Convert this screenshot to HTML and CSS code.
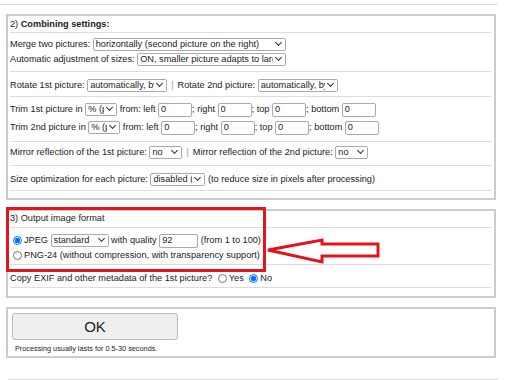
FILE: index.html
```html
<!DOCTYPE html>
<html lang="en">
  <head>
    <meta charset="UTF-8">
    <meta name="viewport" content="width=device-width, initial-scale=1.0">
    <title>Combine pictures</title>
    <link rel="stylesheet" href="styles.css">
  </head>
  <body>
    <div class="page">
      <div class="rule rule-top"></div>

      <div class="box">
        <div class="sec sec-head">2) <b>Combining settings:</b></div>
        <div class="sec sec-merge">
          <div class="row">Merge two pictures: <span class="dd"><select class="w-merge"><option>horizontally (second picture on the right)</option></select></span></div>
          <div class="row">Automatic adjustment of sizes: <span class="dd"><select class="w-auto"><option>ON, smaller picture adapts to larger</option></select></span></div>
        </div>
        <div class="sec sec-rotate">
          <div class="row">Rotate 1st picture: <span class="dd"><select class="w-rot"><option>automatically, by EXIF</option></select></span><span class="sep">|</span>Rotate 2nd picture: <span class="dd"><select class="w-rot"><option>automatically, by EXIF</option></select></span></div>
        </div>
        <div class="sec sec-trim">
          <div class="row row-tall">Trim 1st picture in <span class="dd"><select class="w-unit"><option>% (percent)</option></select></span> from: left <input type="text" value="0">; right <input type="text" value="0">; top <input type="text" value="0">; bottom <input type="text" value="0"></div>
          <div class="row row-tall">Trim 2nd picture in <span class="dd"><select class="w-unit"><option>% (percent)</option></select></span> from: left <input type="text" value="0">; right <input type="text" value="0">; top <input type="text" value="0">; bottom <input type="text" value="0"></div>
        </div>
        <div class="sec sec-mirror">
          <div class="row">Mirror reflection of the 1st picture: <span class="dd"><select class="w-no"><option>no</option></select></span><span class="sep">|</span>Mirror reflection of the 2nd picture: <span class="dd"><select class="w-no"><option>no</option></select></span></div>
        </div>
        <div class="sec sec-size">
          <div class="row">Size optimization for each picture: <span class="dd"><select class="w-size"><option>disabled (default)</option></select></span> (to reduce size in pixels after processing)</div>
        </div>
      </div>

      <div class="box box-format">
        <div class="sec sec-head2">3) Output image format</div>
        <div class="sec sec-format">
          <div class="row"><input type="radio" name="fmt" checked>JPEG <span class="dd"><select class="w-std"><option>standard</option></select></span> with quality <input type="text" class="w-q" value="92"> (from 1 to 100)</div>
          <div class="row"><input type="radio" name="fmt">PNG-24 (without compression, with transparency support)</div>
        </div>
        <div class="sec sec-exif">
          <div class="row">Copy EXIF and other metadata of the 1st picture? <input type="radio" name="exif">Yes <input type="radio" name="exif" checked>No</div>
        </div>
      </div>

      <div class="box box-submit">
        <button class="ok">OK</button>
        <div class="note">Processing usually lasts for 0.5-30 seconds.</div>
      </div>

      <div class="rule rule-bottom"></div>

      <div class="mark"></div>
      <svg class="arrow" width="125" height="36" viewBox="0 0 125 36">
        <polygon points="8,18 62,8 62,12 118,12 118,24 62,24 62,30" fill="none" stroke="#e3141b" stroke-width="3"/>
      </svg>
    </div>
  </body>
</html>
```

FILE: styles.css
```css
body {
    margin: 0;
    font-family: "Liberation Sans", Arial, sans-serif;
    font-size: 9.2px;
    color: #222;
    background: #fff;
}
.page {
    position: relative;
    width: 507px;
    height: 380px;
    overflow: hidden;
}
.rule {
    border-top: 1px solid #ddd;
}
.rule-top {
    margin-top: 4px;
    width: 498px;
}
.rule-bottom {
    margin: 21px 0 0 8px;
    width: 490px;
}
.box {
    box-sizing: border-box;
    width: 490px;
    margin: 9px 0 0 6px;
    border: 2px solid #ccc;
    padding: 0 2px 7px;
}
.box-format {
    padding-bottom: 8px;
}
.box-submit {
    padding: 4px 2px 2px;
}
.sec {
    border-bottom: 1px solid #ddd;
}
.sec-head {
    padding: 1px 0 0;
    line-height: 15px;
}
.sec-merge { padding: 4px 0 4px; }
.sec-rotate { padding: 6px 0 3px; }
.sec-trim { padding: 4px 0 5px; }
.sec-mirror { padding: 3px 0 5px; }
.sec-size { padding: 6px 0 3px; }
.sec-head2 {
    line-height: 15px;
    padding-bottom: 1px;
}
.sec-format { padding: 5px 0 1px; }
.sec-exif { padding: 6px 0 1px; }

.row {
    height: 15px;
    line-height: 15px;
    white-space: nowrap;
}
.row-tall {
    height: 17px;
    line-height: 17px;
    margin-bottom: 1px;
}
.row-tall:last-child {
    margin-bottom: 0;
}
.dd {
    position: relative;
    display: inline-block;
    vertical-align: middle;
    line-height: 0;
}
/* small chevron drawn over the select's right end */
.dd::after {
    content: "";
    position: absolute;
    right: 5px;
    top: 2px;
    width: 4px;
    height: 4px;
    border-right: 1px solid #333;
    border-bottom: 1px solid #333;
    transform: rotate(45deg);
    pointer-events: none;
}
.dd::before {
    content: "";
    position: absolute;
    right: 1px;
    top: 1px;
    width: 12px;
    height: 11px;
    background: #fff;
    pointer-events: none;
}
select {
    appearance: none;
    -webkit-appearance: none;
    box-sizing: border-box;
    height: 13px;
    font: inherit;
    line-height: 11px;
    color: #222;
    border: 1px solid #aaa;
    border-radius: 2px;
    background: #fff;
    padding: 0 12px 0 2px;
    margin: 0;
    text-align: left;
}
input[type="text"] {
    box-sizing: border-box;
    width: 34px;
    height: 14px;
    font: inherit;
    color: #222;
    border: 1px solid #aaa;
    border-radius: 2px;
    padding: 0 2px;
    margin: 0;
    vertical-align: middle;
}
input[type="radio"] {
    width: 9px;
    height: 9px;
    margin: 0 2px 0 3px;
    vertical-align: middle;
}
.w-merge { width: 193px; }
.w-auto { width: 149px; }
.w-rot { width: 80px; }
.w-unit { width: 32px; }
.w-no { width: 33px; }
.w-size { width: 55px; }
.w-std { width: 58px; }
input.w-q { width: 39px; }
.sep {
    color: #999;
    margin: 0 4px;
}
.ok {
    display: block;
    width: 166px;
    height: 27px;
    margin-left: 2px;
    font-family: "Liberation Sans", Arial, sans-serif;
    font-size: 15px;
    color: #222;
    background: #efefef;
    border: 1px solid #bbb;
    border-radius: 3px;
}
.note {
    margin: 4px 0 0 5px;
    font-size: 7.3px;
    line-height: 10px;
}
.mark {
    position: absolute;
    left: 6px;
    top: 207px;
    width: 260px;
    height: 65px;
    box-sizing: border-box;
    border: 3px solid #e3141b;
}
.arrow {
    position: absolute;
    left: 260px;
    top: 232px;
}
```
